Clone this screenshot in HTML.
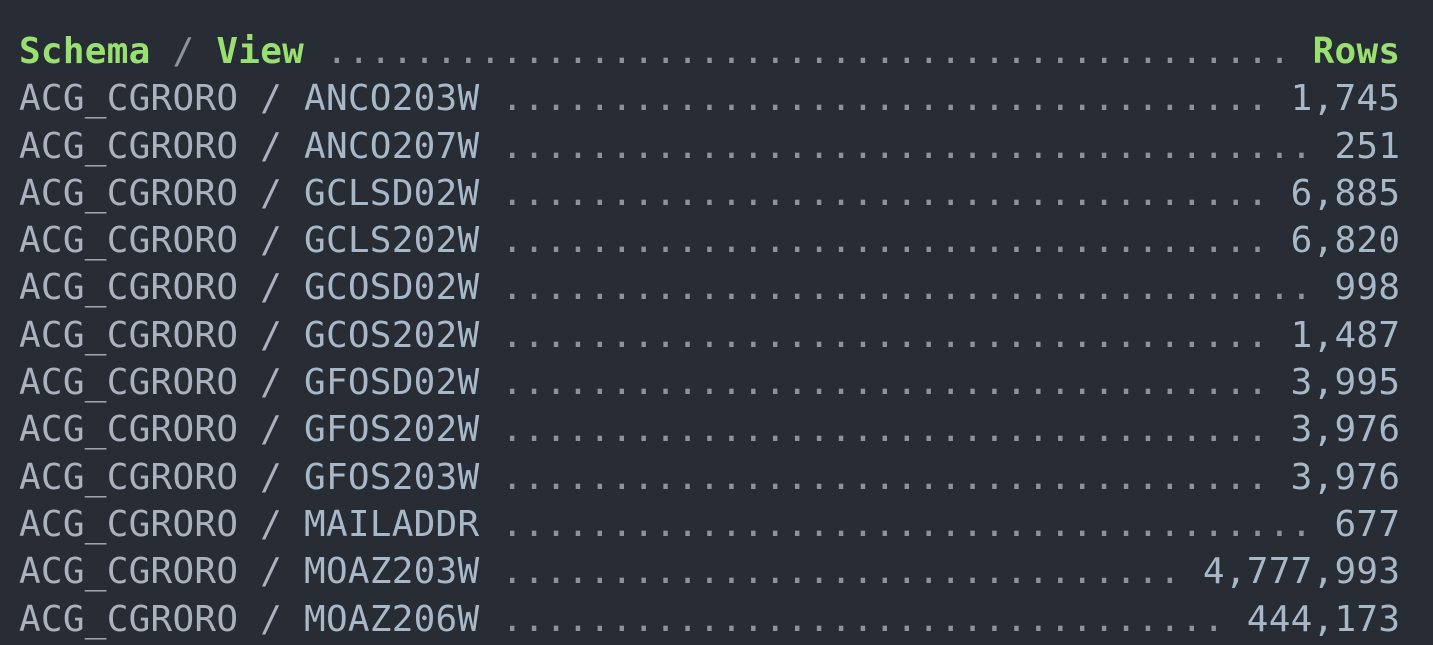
<!DOCTYPE html>
<html><head><meta charset="utf-8"><style>
html,body{margin:0;padding:0;background:#282c34;width:1433px;height:645px;overflow:hidden}
pre{margin:0;padding:28px 0 0 19px;font-family:"DejaVu Sans Mono","Liberation Mono",monospace;font-size:36px;letter-spacing:0.25px;line-height:47.3px;color:#abb2bf}
.g{color:#98e06f;font-weight:bold}
.d{color:#8b939e}
.n{color:#a9b8c8}
</style></head><body><pre><span class="g">Schema</span> <span class="d">/</span> <span class="g">View</span> <span class="d">............................................</span> <span class="g">Rows</span>
ACG_CGRORO / <span class="n">ANCO203W</span> <span class="d">...................................</span> <span class="n">1,745</span>
ACG_CGRORO / <span class="n">ANCO207W</span> <span class="d">.....................................</span> <span class="n">251</span>
ACG_CGRORO / <span class="n">GCLSD02W</span> <span class="d">...................................</span> <span class="n">6,885</span>
ACG_CGRORO / <span class="n">GCLS202W</span> <span class="d">...................................</span> <span class="n">6,820</span>
ACG_CGRORO / <span class="n">GCOSD02W</span> <span class="d">.....................................</span> <span class="n">998</span>
ACG_CGRORO / <span class="n">GCOS202W</span> <span class="d">...................................</span> <span class="n">1,487</span>
ACG_CGRORO / <span class="n">GFOSD02W</span> <span class="d">...................................</span> <span class="n">3,995</span>
ACG_CGRORO / <span class="n">GFOS202W</span> <span class="d">...................................</span> <span class="n">3,976</span>
ACG_CGRORO / <span class="n">GFOS203W</span> <span class="d">...................................</span> <span class="n">3,976</span>
ACG_CGRORO / <span class="n">MAILADDR</span> <span class="d">.....................................</span> <span class="n">677</span>
ACG_CGRORO / <span class="n">MOAZ203W</span> <span class="d">...............................</span> <span class="n">4,777,993</span>
ACG_CGRORO / <span class="n">MOAZ206W</span> <span class="d">.................................</span> <span class="n">444,173</span></pre></body></html>
